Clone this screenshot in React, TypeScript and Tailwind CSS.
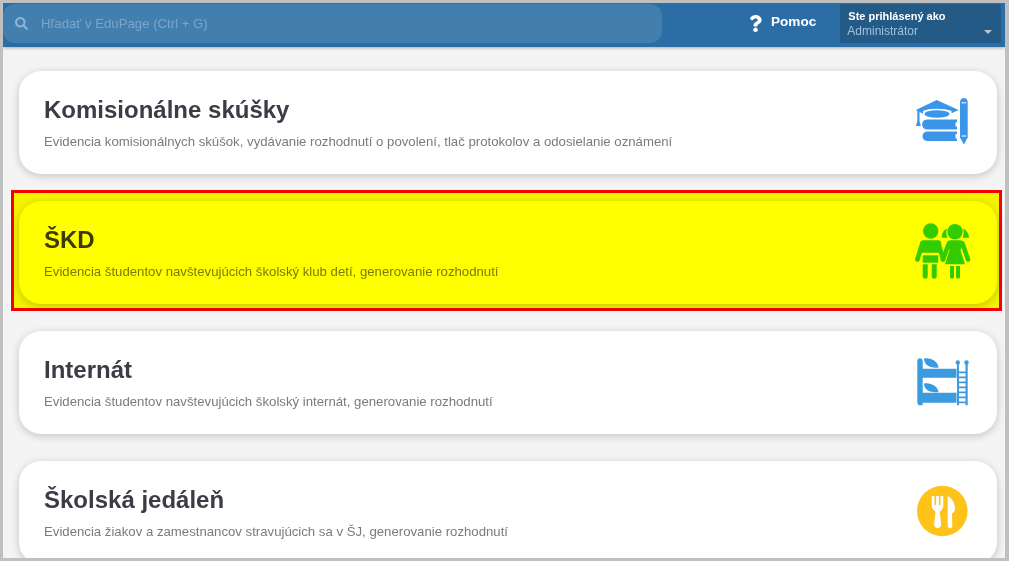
import { ReactNode } from 'react'
import { FaSearch, FaQuestion } from 'react-icons/fa'

const BooksIcon = () => (
  <svg width="56" height="56" viewBox="0 0 56 56" className="shrink-0 overflow-visible">
    <g fill="#3b96ea">
      <path d="M22.700 5 44.600 15 37.500 18.300V16C30 13 15 13 9 16V18.800L1.800 15Z" />
      <ellipse cx="23" cy="19" rx="12.500" ry="3.800" />
      <path d="M3.300 15.500H5.500V26L6.800 31H2L3.300 26Z" />
      <path d="M13 24.500H43V27.300H41.500V31.500H43V34.500H13C6.500 34.500 6.500 24.500 13 24.500Z" />
      <path d="M13 36.500H43V39H41.500V43.500H43V46H13C7 46 7 36.500 13 36.500Z" />
      <path d="M46 7C46 1.800 53.700 1.800 53.700 7V42.500L49.900 49.500 46 42.500Z" />
    </g>
    <path d="M47.500 7.800H52.200M47.500 41H52.200" stroke="#ffffff" strokeWidth="1" />
  </svg>
)

const KidsIcon = () => (
  <svg width="56" height="56" viewBox="0 0 56 56" className="shrink-0 overflow-visible">
    <g fill="#33cc00">
      <circle cx="16.700" cy="6" r="7.700" />
      <path d="M9.500 15.300H24C26 15.300 27 16.500 27.500 18L25 24V27.700H8V24L6 18C6.500 16.500 7.500 15.300 9.500 15.300Z" />
      <path d="M8.700 30.300H24.300V37.700H8.700Z" />
      <path d="M8.700 39.300H13.700V51.500C13.700 54.500 8.700 54.500 8.700 51.500Z" />
      <path d="M17.700 39.300H22.700V51.500C22.700 54.500 17.700 54.500 17.700 51.500Z" />
      <circle cx="41" cy="6.700" r="7.700" />
      <path d="M33 3.500C29.500 5 27.500 9 27.700 12.700H33.500C32 9.500 32 6.500 33 3.500Z" />
      <path d="M49 3.500C52.500 5 55 9 55 12.700H48.500C50 9.500 50 6.500 49 3.500Z" />
      <path d="M36.500 15.300H46C47.500 15.300 49 16 50 17.500L46.500 25 51 39.300H31L35.500 25 33 17.500C34 16 35 15.300 36.500 15.300Z" />
      <path d="M36 41H40V51.500C40 54.500 36 54.500 36 51.500Z" />
      <path d="M42 41H46V51.500C46 54.500 42 54.500 42 51.500Z" />
    </g>
    <g stroke="#33cc00" strokeWidth="4.600" strokeLinecap="round">
      <path d="M8.500 18 3.400 34.500" />
      <path d="M24.500 18 29 34.500" />
      <path d="M34.800 18.500 29 34.500" />
      <path d="M48.500 18.500 54 34.500" />
    </g>
  </svg>
)

const BedIcon = () => (
  <svg width="56" height="56" viewBox="0 0 56 56" className="shrink-0 overflow-visible">
    <g fill="#3b9ae0">
      <path d="M3.300 6C3.300 2.300 8.700 2.300 8.700 6V13.700H42.500V22.800H8.700V37.700H42.500V47.700H8.700V50.300H4.500L3.300 47.700Z" />
      <path d="M10 3.500C16 2 24 6 24.500 12.500C18 13.500 10 11 10 3.500Z" />
      <path d="M10 28.500C16 27 24 31 24.500 37C18 38 10 36 10 28.500Z" />
      <circle cx="43.800" cy="7.500" r="2.200" />
      <circle cx="52.500" cy="7.500" r="2.200" />
      <path d="M43 7.500H45V50.300H43Z" />
      <path d="M51.500 7.500H53.700V50.300H51.500Z" />
      <path d="M45 16.500H52V18.200H45ZM45 21.500H52V23.200H45ZM45 26.500H52V28.200H45ZM45 31.500H52V33.200H45ZM45 36.500H52V38.200H45ZM45 41.500H52V43.200H45ZM45 46.500H52V48.200H45Z" />
    </g>
  </svg>
)

const FoodIcon = () => (
  <svg width="56" height="56" viewBox="0 0 56 56" className="shrink-0 overflow-visible">
    <circle cx="28.300" cy="26" r="25.300" fill="#fec318" />
    <g fill="#ffffff">
      <path d="M17.700 11H20.500V20H22.100V11H24.900V20H26.500V11H29.300V21C29.300 24 26.500 25 25.800 27.500L27.200 39C27.500 44.500 19.800 44.500 20.100 39L21.500 27.500C20.800 25 17.700 24 17.700 21Z" />
      <path d="M33.700 11C38 13 41 18 41 23.500C41 26 39.500 27.500 38 28.500L38.300 40C38.300 44.500 33.700 44.500 33.700 40Z" />
    </g>
  </svg>
)

const Card = ({ title, text, icon }: { title: string; text: string; icon: ReactNode }) => (
  <div className="flex h-[103px] shrink-0 items-center justify-between rounded-[22px] bg-white pl-[25px] pr-[27px] shadow-[0_2px_8px_rgba(0,0,0,0.2)]">
    <div>
      <h2 className="text-[24px] leading-[28px] font-bold text-[#3c3c46]">{title}</h2>
      <p className="mt-[10px] text-[13.200px] leading-[16px] text-[#7b7b7b]">{text}</p>
    </div>
    {icon}
  </div>
)

export default function App() {
  return (
    <div className="h-[561px] w-[1009px] overflow-hidden bg-[#c0c0c0] pt-[3px] pr-[4px] pb-[3px] pl-[3px] font-['Liberation_Sans',Arial,sans-serif]">
      <div className="relative flex h-full flex-col overflow-hidden bg-[#f4f4f4]">
        <header className="flex h-[44px] shrink-0 items-center bg-[#2b6ea5] pb-[3px] shadow-[0_1px_3px_rgba(0,0,0,0.3)]">
          <div className="flex h-[39px] w-[659px] items-center rounded-[12px] bg-[#437fae] pl-[12px]">
            <FaSearch className="text-[13px] text-[#8db4d4]" />
            <span className="ml-[13px] text-[13.200px] text-[#7ba6c9]">Hľadať v EduPage (Ctrl + G)</span>
          </div>
          <div className="ml-[85px] flex items-center pb-[2px]">
            <FaQuestion className="translate-y-px text-[17px] text-white" />
            <span className="ml-[7px] text-[13.600px] font-bold text-white">Pomoc</span>
          </div>
          <div className="relative ml-[24px] h-[39px] w-[161px] rounded-[2px] bg-[#245a86] pt-[6px] pl-[8px]">
            <div className="text-[11px] leading-[13px] font-bold text-white">Ste prihlásený ako</div>
            <div className="-ml-px mt-[1px] text-[12px] leading-[14px] text-[#9fc0e0]">Administrátor</div>
            <span className="absolute top-[26px] right-[9px] border-x-[4px] border-t-[4px] border-x-transparent border-t-[#b5c8d8]" />
          </div>
        </header>
        <main className="flex flex-col gap-[27px] pt-[24px] pr-[8px] pl-[16px]">
          <Card
            title="Komisionálne skúšky"
            text="Evidencia komisionálnych skúšok, vydávanie rozhodnutí o povolení, tlač protokolov a odosielanie oznámení"
            icon={<BooksIcon />}
          />
          <Card
            title="ŠKD"
            text="Evidencia študentov navštevujúcich školský klub detí, generovanie rozhodnutí"
            icon={<KidsIcon />}
          />
          <Card
            title="Internát"
            text="Evidencia študentov navštevujúcich školský internát, generovanie rozhodnutí"
            icon={<BedIcon />}
          />
          <Card
            title="Školská jedáleň"
            text="Evidencia žiakov a zamestnancov stravujúcich sa v ŠJ, generovanie rozhodnutí"
            icon={<FoodIcon />}
          />
        </main>
        {/* yellow marker drawn over the second card */}
        <div className="absolute top-[187px] left-[8px] h-[121px] w-[991px] border-[3px] border-[#ff0000] bg-[#ffff00] mix-blend-multiply" />
      </div>
    </div>
  )
}
